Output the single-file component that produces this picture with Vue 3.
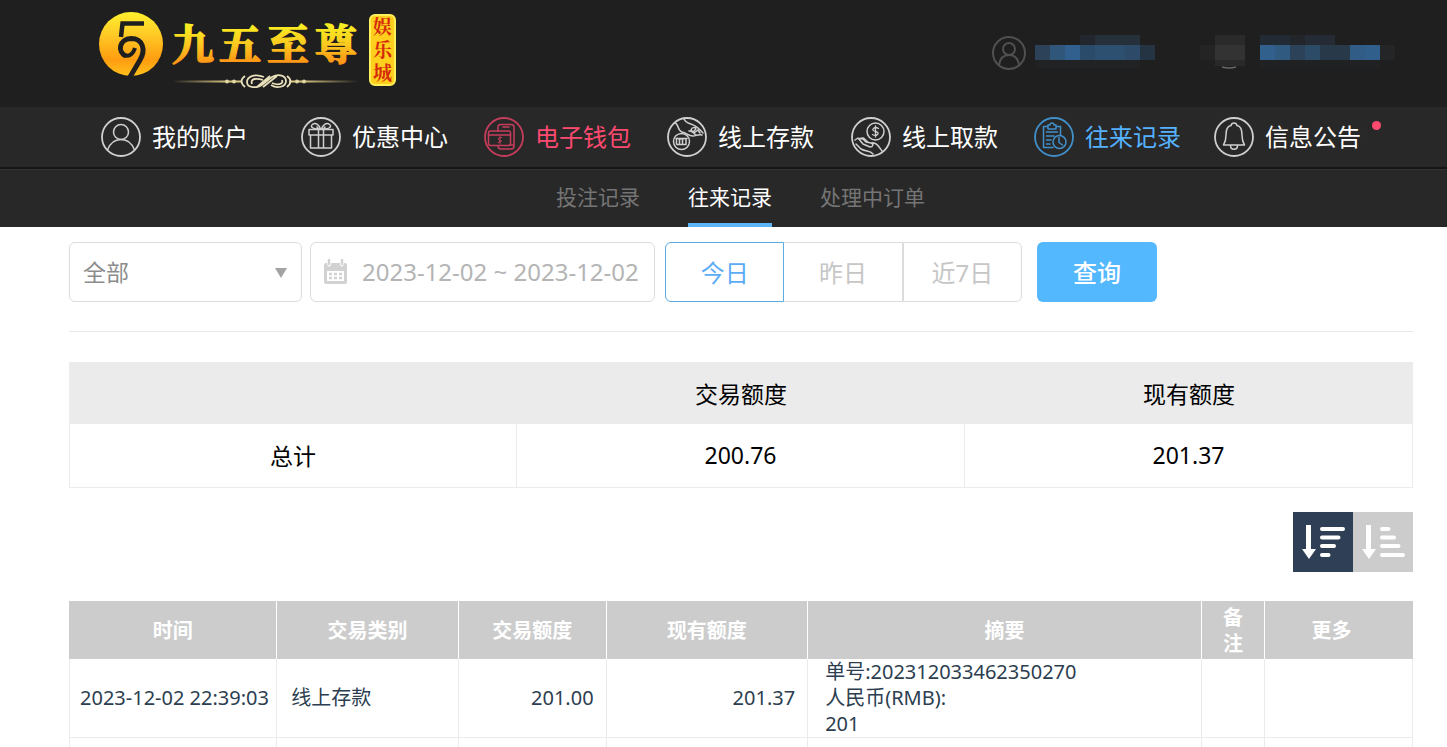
<script setup>
import { ref } from 'vue'

const nav = [
  { icon: 'user', label: '我的账户' },
  { icon: 'gift', label: '优惠中心' },
  { icon: 'wallet', label: '电子钱包', tone: 'red' },
  { icon: 'deposit', label: '线上存款' },
  { icon: 'withdraw', label: '线上取款' },
  { icon: 'record', label: '往来记录', tone: 'blue' },
  { icon: 'bell', label: '信息公告', dot: true },
]
const tabs = ['投注记录', '往来记录', '处理中订单']
const activeTab = ref(1)
const ranges = ['今日', '昨日', '近7日']
const activeRange = ref(0)
const order = ref('desc')
const category = ref('all')
const period = ref('2023-12-02 ~ 2023-12-02')
const heads = ['时间', '交易类别', '交易额度', '现有额度', '摘要', '备注', '更多']
const blocks = [
  [45, 35, 15, 10, '#22272d'], [60, 35, 45, 10, '#25303a'],
  [0, 45, 15, 15, '#2b4258'], [15, 45, 15, 15, '#30567a'], [30, 45, 15, 15, '#315f8e'],
  [45, 45, 15, 15, '#2a4b69'], [60, 45, 30, 15, '#2e5070'], [90, 45, 15, 15, '#2d4a68'],
  [105, 45, 15, 15, '#253443'], [0, 60, 105, 8, '#202224'],
  [165, 45, 15, 15, '#242424'], [180, 35, 30, 10, '#2a2a2a'], [180, 45, 30, 15, '#333333'], [180, 60, 30, 6, '#292929'],
  [225, 35, 30, 10, '#222a34'], [255, 35, 15, 10, '#22262b'], [270, 35, 30, 10, '#242b35'],
  [225, 45, 15, 15, '#32608c'], [240, 45, 15, 15, '#315a80'], [255, 45, 15, 15, '#2b4258'],
  [270, 45, 15, 15, '#2b4b66'], [285, 45, 30, 15, '#28394a'], [315, 45, 15, 15, '#315c86'],
  [330, 45, 15, 15, '#315f8c'], [345, 45, 15, 15, '#232527'], [225, 60, 120, 8, '#202123'],
]
</script>

<template>
  <div class="page">
    <header class="top">
      <a href="#" class="brand" aria-label="九五至尊娱乐城">
        <svg width="300" height="84" viewBox="0 0 300 84">
          <defs>
            <linearGradient id="gold" x1="0" y1="0" x2="0" y2="1">
              <stop offset="0" stop-color="#fff02d" />
              <stop offset="0.3" stop-color="#ffd028" />
              <stop offset="0.75" stop-color="#ff9c10" />
              <stop offset="1" stop-color="#ffc21c" />
            </linearGradient>
            <linearGradient id="goldText" gradientUnits="userSpaceOnUse" x1="0" y1="16" x2="0" y2="57">
              <stop offset="0" stop-color="#f8f022" />
              <stop offset="0.5" stop-color="#fbc91f" />
              <stop offset="1" stop-color="#ff8e14" />
            </linearGradient>
            <linearGradient id="fade" gradientUnits="userSpaceOnUse" x1="75" y1="0" x2="261" y2="0">
              <stop offset="0" stop-color="#d8c580" stop-opacity="0" />
              <stop offset="0.3" stop-color="#d8c580" />
              <stop offset="0.7" stop-color="#d8c580" />
              <stop offset="1" stop-color="#d8c580" stop-opacity="0" />
            </linearGradient>
          </defs>
          <circle cx="34" cy="36" r="32" fill="url(#gold)" />
          <path d="M47 15.500H25.500L24 29" fill="none" stroke="#1f1f1f" stroke-width="4.500" />
          <path d="M29 48C20 44 22 31 34 30.500C46 30.500 49 42 43 52L33 69" fill="none" stroke="#1f1f1f" stroke-width="5" />
          <path d="M26 47Q35 50 38 40" fill="none" stroke="#1f1f1f" stroke-width="4" />
          <g class="brand-name" fill="url(#goldText)" stroke="url(#goldText)" stroke-width="1.500">
            <text x="75" y="52">九</text><text x="122" y="52">五</text>
            <text x="170" y="52">至</text><text x="218" y="52">尊</text>
          </g>
          <path d="M75 73.500H145M192 73.500H261" stroke="url(#fade)" stroke-width="2" />
          <g fill="#e2d5a3"><circle cx="130" cy="73.500" r="2" /><circle cx="137" cy="73.500" r="2" /><circle cx="200" cy="73.500" r="2" /><circle cx="207" cy="73.500" r="2" /></g>
          <g fill="none" stroke="#e8dfbb" stroke-width="1.800">
            <path d="M148 68Q141 73 148 79M190 68Q197 73 190 79" />
            <path d="M167 69C157 65 150 69 150 74C150 80 160 81 166 76L175 69C182 65 189 68 189 73C189 79 180 81 174 77M155 76C153 70 160 70 166 72M185 72C187 77 180 77 175 75M160 79L173 68M166 79L180 68" />
          </g>
          <rect x="273" y="7" width="25" height="70" rx="5" fill="#ffcf1d" stroke="#fff05a" stroke-width="2" />
          <g class="brand-tag" fill="#d42a0b"><text x="276" y="26">娱</text><text x="276" y="49">乐</text><text x="276" y="72">城</text></g>
        </svg>
      </a>
      <div class="account">
        <svg width="34" height="34" viewBox="0 0 34 34" fill="none" stroke="#505050" stroke-width="2">
          <circle cx="17" cy="17" r="16" /><circle cx="17" cy="13" r="6" /><path d="M7 29C8 22 12 19 17 19S26 22 27 29" />
        </svg>
        <svg class="masked" width="360" height="35" viewBox="0 35 360 35" aria-hidden="true">
          <rect v-for="(b, i) in blocks" :key="i" :x="b[0]" :y="b[1]" :width="b[2]" :height="b[3]" :fill="b[4]" />
          <path d="M187 67Q194 69 201 67" fill="none" stroke="#666" stroke-width="1.500" />
        </svg>
      </div>
    </header>

    <nav class="main-nav">
      <a v-for="item in nav" :key="item.label" href="#" :class="['nav-item', item.tone]">
        <svg class="nav-icon" width="40" height="40" viewBox="0 0 40 40" fill="none" stroke="currentColor" stroke-width="1.500" stroke-linecap="round" stroke-linejoin="round">
          <circle cx="20" cy="20" r="19" stroke-width="1.800" />
          <template v-if="item.icon === 'user'">
            <circle cx="20" cy="15" r="7.500" /><path d="M6.500 33C9 26 14 22.500 20 22.500S31 26 33.500 33" />
          </template>
          <template v-else-if="item.icon === 'gift'">
            <path d="M8 12.500H32V18H8ZM9.500 18V31H30.500V18M17.500 12.500V31M22.500 12.500V31" />
            <path d="M18.500 12C10 12 9 9 12 7C15 5.500 18 8 19.500 12M21.500 12C30 12 31 9 28 7C25 5.500 22 8 20.500 12M17.500 12L16 10M22.500 12L24 10" />
          </template>
          <template v-else-if="item.icon === 'wallet'">
            <path d="M14 14V10Q14 7.500 16.500 7.500H27Q30 7.500 30 10V29Q30 32 27 32H17Q14 32 14 29M19 10H25M26 28H30" />
            <rect x="4.500" y="14" width="22" height="14.500" rx="2" /><path d="M4.500 18H26.500" />
            <path d="M17.500 20.500Q14 20 14.500 22T17 24T14 25.500M16 19.500V27" stroke-width="1" />
          </template>
          <template v-else-if="item.icon === 'deposit'">
            <path d="M8 6C12 7 10 13 15 15C20 16 21 19 26 19C29 19 31 17 35 18M17 2C19 7 24 6 28 9C32 11 33 13 36 16M24 13C25 10 28 10 29 12L26 15ZM27 16L31 13L33 16M22 14C25 13 27 17 29 18" />
            <circle cx="14.500" cy="24.500" r="8" /><path d="M9.500 27V22.500Q11 20 12.500 23V27M12.500 23Q14.500 20 15.500 23V27M15.500 23Q17.500 20 19 22.500V27M9 21.500H20M10 27.500H19" />
          </template>
          <template v-else-if="item.icon === 'withdraw'">
            <circle cx="24.500" cy="14.500" r="8.500" />
            <path d="M27.500 11.500Q24.500 9.500 22.500 11.500T24.500 14.500T26.500 17.500T21.500 17.500M24.500 9V20" stroke-width="1.300" />
            <path d="M4 23L7 21L12 27L19 30C22 30 23 27 20 26L15 25C12 22 10 20 8 22M10 22C12 19 14 23 17 25M5 27L10 32C15 35 19 33 22 37M20 26C26 25 28 30 31 34" />
          </template>
          <template v-else-if="item.icon === 'record'">
            <path d="M14 9.500H9.500V30.500H19M22 9.500H26.500V18M14 8H16Q16 6 18 6T20 8H22V12H14ZM12.500 15H23.500M12.500 19H20M12.500 23H17M12.500 27H16" />
            <circle cx="25.500" cy="25" r="6.500" /><path d="M25 20.500V25.500L28.500 28" />
          </template>
          <template v-else>
            <path d="M9.500 28Q12 24 12 18C12 12 14 9 17 8.500Q17.500 6 20 6T23 8.500C26 9 28 12 28 18Q28 24 30.500 28ZM16.500 28.500C16.500 33.500 23.500 33.500 23.500 28.500" />
          </template>
        </svg>
        <span class="nav-label">{{ item.label }}<i v-if="item.dot" class="dot"></i></span>
      </a>
    </nav>

    <nav class="sub-nav">
      <a v-for="(tab, i) in tabs" :key="tab" href="#" :class="{ active: activeTab === i }" @click.prevent="activeTab = i">{{ tab }}</a>
    </nav>

    <main class="content">
      <form class="filters" @submit.prevent>
        <div class="select-box">
          <select v-model="category" aria-label="交易类别">
            <option value="all">全部</option>
          </select>
          <svg class="arrow" width="12" height="10" viewBox="0 0 12 10"><path d="M0 0H12L6 10Z" fill="#a3a3a3" /></svg>
        </div>
        <label class="date-box">
          <svg width="25" height="26" viewBox="0 0 25 26">
            <path d="M3 5H4Q5 11 8 7V5H17V7Q20 11 21 5H22Q24 5 24 7V24Q24 26 22 26H3Q1 26 1 24V7Q1 5 3 5Z" fill="#d2d2d2" />
            <path d="M6 2V6M19 2V6" stroke="#d2d2d2" stroke-width="2.500" stroke-linecap="round" />
            <path d="M4 13H21V23H4Z" fill="#fff" />
            <path d="M6 16H19M6 20H19" stroke="#d2d2d2" stroke-width="2.500" stroke-dasharray="3 2" />
          </svg>
          <input v-model="period" type="text" aria-label="日期" />
        </label>
        <div class="ranges">
          <button v-for="(r, i) in ranges" :key="r" type="button" :class="{ active: activeRange === i }" @click="activeRange = i">{{ r }}</button>
        </div>
        <button class="query" type="submit">查询</button>
      </form>

      <table class="summary">
        <thead><tr><th></th><th>交易额度</th><th>现有额度</th></tr></thead>
        <tbody><tr><td>总计</td><td>200.76</td><td>201.37</td></tr></tbody>
      </table>

      <div class="sort">
        <button type="button" :class="{ active: order === 'desc' }" aria-label="降序" @click="order = 'desc'">
          <svg width="60" height="60" viewBox="0 0 60 60"><path d="M13 13H18V37H23L16 47L9 37H13Z" fill="#fff" /><path d="M29 17H50M29 25.500H45.500M29 34H41M29 43H35.500" stroke="#fff" stroke-width="4" stroke-linecap="round" /></svg>
        </button>
        <button type="button" :class="{ active: order === 'asc' }" aria-label="升序" @click="order = 'asc'">
          <svg width="60" height="60" viewBox="0 0 60 60"><path d="M13 13H18V37H23L16 47L9 37H13Z" fill="#fff" /><path d="M29 17H35.500M29 25.500H41M29 34H45.500M29 43H50" stroke="#fff" stroke-width="4" stroke-linecap="round" /></svg>
        </button>
      </div>

      <table class="records">
        <colgroup><col class="c-time" /><col class="c-type" /><col class="c-amount" /><col class="c-balance" /><col class="c-digest" /><col class="c-note" /><col class="c-more" /></colgroup>
        <thead><tr><th v-for="h in heads" :key="h">{{ h }}</th></tr></thead>
        <tbody>
          <tr>
            <td class="time">2023-12-02 22:39:03</td>
            <td class="type">线上存款</td>
            <td class="num">201.00</td>
            <td class="num">201.37</td>
            <td class="digest">单号:202312033462350270<br />人民币(RMB):<br />201</td>
            <td></td>
            <td></td>
          </tr>
          <tr><td v-for="n in 7" :key="n"></td></tr>
        </tbody>
      </table>
    </main>
  </div>
</template>

<style>
body { margin: 0; background: #fff; }
</style>

<style scoped>
* { box-sizing: border-box; }
.page { height: 100vh; overflow: hidden; font-family: "Noto Sans", "Noto Sans CJK SC", sans-serif; color: #000; }
a { text-decoration: none; color: inherit; }
button, input, select { font: inherit; margin: 0; padding: 0; border: 0; background: none; }
svg { display: block; flex: none; }

.top { display: flex; justify-content: space-between; align-items: flex-start; height: 107px; padding: 8px 52px 0 97px; background: #1f1f1f; }
.brand-name { font-family: "Noto Serif CJK SC", "Noto Sans CJK SC", serif; font-size: 42px; font-weight: 700; }
.brand-tag { font-family: "Liberation Serif", "Noto Serif CJK SC", "Noto Sans CJK SC", serif; font-size: 19px; font-weight: 700; }
.account { display: flex; align-items: center; gap: 9px; padding-top: 27px; }

.main-nav { display: grid; grid-template-columns: 200fr 183fr 183fr 184fr 183fr 180fr 180fr; align-items: center; height: 62px; padding: 0 53px 0 101px; background: #282828; border-bottom: 2px solid #151515; }
.nav-item { display: flex; align-items: center; gap: 11px; color: #fff; font-size: 24px; line-height: 36px; white-space: nowrap; }
.nav-icon { color: #cfcfcf; }
.nav-item.red { color: #ff4a70; }
.nav-item.red .nav-icon { color: #c63d5c; }
.nav-item.blue { color: #55b2ff; }
.nav-item.blue .nav-icon { color: #418fc9; }
.nav-label { position: relative; }
.dot { position: absolute; left: 100%; top: 2px; width: 9px; height: 9px; margin-left: 11px; border-radius: 50%; background: #ff4a70; }

.sub-nav { display: flex; justify-content: center; gap: 48px; height: 58px; padding: 0 35px 0 69px; background: #282828; border-top: 1px solid #343434; font-size: 21px; line-height: 55px; color: #757575; }
.sub-nav .active { color: #fff; border-bottom: 4px solid #5bb4f5; }

.content { padding: 15px 34px 0 69px; }
.filters { display: flex; height: 90px; align-items: flex-start; border-bottom: 1px solid #e8e8e8; }
.select-box { position: relative; width: 233px; height: 60px; margin-right: 8px; }
.select-box select { width: 100%; height: 100%; padding: 0 13px; appearance: none; border: 1px solid #dcdcdc; border-radius: 6px; font-size: 23px; color: #8c8c8c; }
.arrow { position: absolute; right: 15px; top: 26px; pointer-events: none; }
.date-box { display: flex; align-items: center; width: 345px; height: 60px; margin-right: 10px; padding: 0 8px 2px 12px; gap: 14px; border: 1px solid #dcdcdc; border-radius: 6px; }
.date-box input { flex: 1; min-width: 0; font-size: 24px; color: #b4b4b4; outline: 0; }
.ranges { display: flex; width: 357px; margin-right: 15px; }
.ranges button { flex: 1; height: 60px; padding-bottom: 2px; border: 1px solid #dcdcdc; border-left-width: 0; font-size: 24px; color: #c6c6c6; }
.ranges button:last-child { border-left-width: 1px; border-radius: 0 6px 6px 0; }
.ranges button:first-child { border-left-width: 1px; border-radius: 6px 0 0 6px; }
.ranges button.active { border-color: #5cabe2; color: #5cabf5; }
.query { width: 120px; height: 60px; padding-bottom: 2px; border-radius: 6px; background: #54b8ff; color: #fff; font-size: 24px; font-weight: 500; }

table { width: 100%; border-collapse: separate; border-spacing: 0; table-layout: fixed; }
.summary { margin-top: 30px; font-size: 23px; }
.summary th { height: 62px; padding: 0; background: #ebebeb; font-weight: 400; }
.summary td { height: 64px; padding: 0 0 2px; text-align: center; border: solid #ebebeb; border-width: 0 1px 1px 0; }
.summary td:first-child, .records td:first-child { border-left-width: 1px; }

.sort { display: flex; justify-content: flex-end; margin: 24px 0 29px; }
.sort button { background: #ccc; }
.sort .active { background: #2f4056; }

.records { font-size: 20px; line-height: 26px; color: #2c3e50; }
.c-time { width: 15.5%; } .c-type { width: 13.5%; } .c-amount { width: 11%; } .c-balance { width: 15%; }
.c-digest { width: 29.3%; } .c-note { width: 4.7%; } .c-more { width: 11%; }
.records th { height: 58px; padding: 4px 20px 2px; background: #ccc; color: #fff; font-weight: 700; border-right: 1px solid #fff; }
.records th:last-child { padding-right: 34px; border-right-color: #ccc; }
.records td { height: 79px; padding: 0; border: solid #ebebeb; border-width: 0 1px 1px 0; }
.records .time { padding-left: 10px; white-space: nowrap; }
.records .type { padding-left: 14px; }
.records .num { padding-right: 12px; text-align: right; }
.records .digest { padding-left: 17px; }
</style>
